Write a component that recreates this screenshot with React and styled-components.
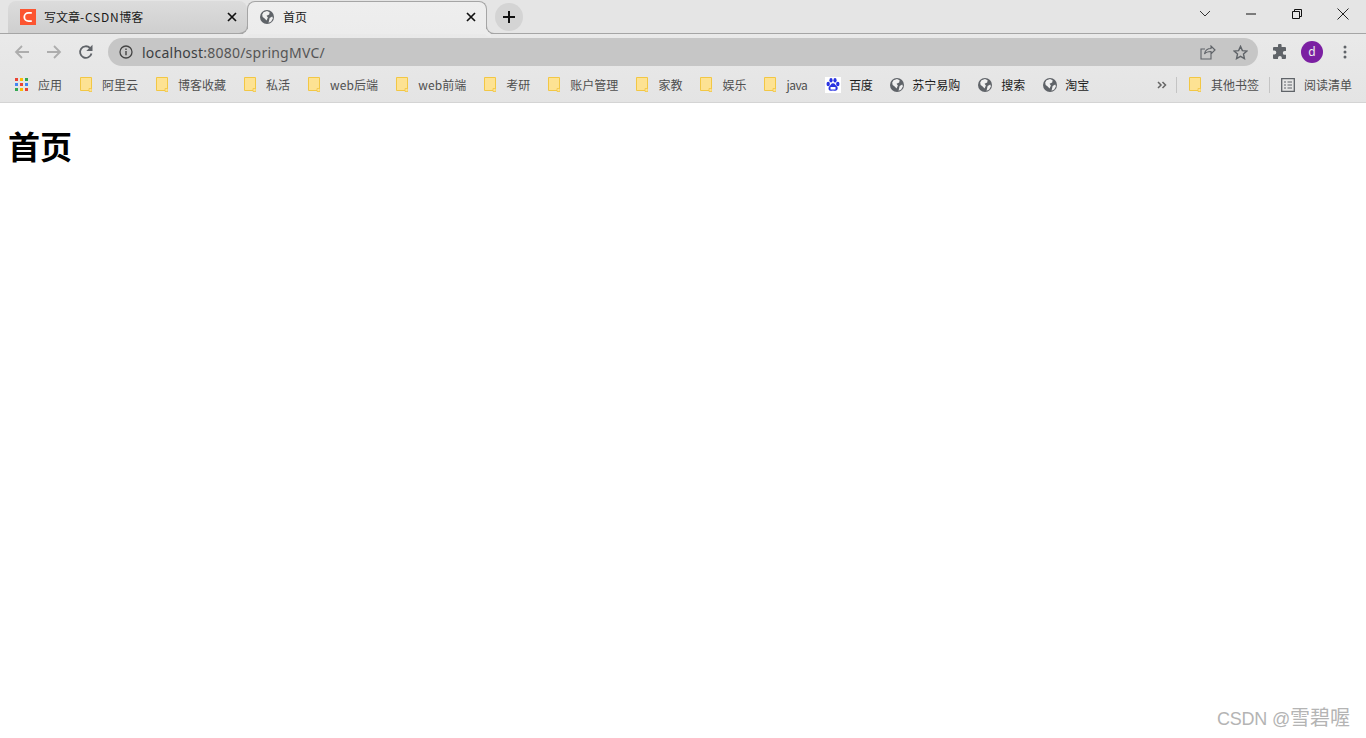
import React from "react";
import styled, { createGlobalStyle } from "styled-components";

const Global = createGlobalStyle`
  html, body { margin: 0; padding: 0; background: #fff; }
  body { font-family: "Noto Sans CJK SC", "Noto Sans", sans-serif; overflow: hidden; }
`;
const Page = styled.div`position: relative; width: 1366px; height: 738px; background: #fff; overflow: hidden;`;
const Chrome = styled.header`
  height: 103px; box-sizing: border-box; border-bottom: 1px solid #d4d4d4;
  background: linear-gradient(#ececec, #e4e4e4 100%);
`;
const TabStrip = styled.div`
  display: flex; align-items: flex-end; height: 34px; box-sizing: border-box; padding-left: 8px;
  background: #e5e5e5; border-bottom: 1px solid #a5a5a5; position: relative;
`;
const Tab = styled.div`
  display: flex; align-items: center; width: ${p => p.$w}px; height: 33px; box-sizing: border-box;
  margin-bottom: -1px; position: relative; padding: 0 10px 1px 12px;
  font-size: 12px; color: #1a1a1a;
  border-radius: ${p => p.$active ? "8px 8px 0 0" : "8px 8px 8px 0"};
  background: ${p => p.$active ? "linear-gradient(#eeeeee,#ececec)" : "linear-gradient(#dcdcdc,#cfcfcf)"};
  border: ${p => p.$active ? "1px solid #a5a5a5" : "0"};
  border-bottom: ${p => p.$active ? "1px solid #ececec" : "1px solid #a5a5a5"};
`;
const Flare = styled.span`
  position: absolute; bottom: -1px; ${p => p.$side}: -8px; width: 8px; height: 8px; box-sizing: border-box;
  border-bottom: 1px solid #a5a5a5;
  border-${p => p.$side === "right" ? "left" : "right"}: 1px solid #a5a5a5;
  border-radius: ${p => p.$side === "right" ? "0 0 0 8px" : "0 0 8px 0"};
  box-shadow: ${p => p.$side === "right" ? "-3px 3px 0 #ececec" : "3px 3px 0 #ececec"};
`;
const TabTitle = styled.span`margin-left: ${p => p.$ml}px; flex: 1; line-height: 16px;`;
const LatinRun = styled.span`letter-spacing: 0.75px;`;
const NewTab = styled.div`
  width: 28px; height: 28px; border-radius: 50%; background: #d4d4d4; margin: 0 0 2px 8px;
  display: flex; align-items: center; justify-content: center;
`;
const WinControls = styled.div`display: flex; margin-left: auto; align-self: flex-start; height: 28px; align-items: center;`;
const WinButton = styled.div`width: 46px; height: 28px; display: flex; align-items: center; justify-content: center;`;
const Toolbar = styled.div`display: flex; align-items: center; height: 36px; padding: 0 9px 0 8px;`;
const NavButton = styled.div`width: 28px; height: 28px; margin-right: ${p => p.$mr ?? 4}px; display: flex; align-items: center; justify-content: center;`;
const Omnibox = styled.div`
  width: 1150px; height: 28px; border-radius: 14px; background: #c6c6c6; display: flex; align-items: center;
  padding: 0 2px 0 11px; box-sizing: border-box; margin-right: 8px; margin-left: 4px;
`;
const Url = styled.span`
  font: 14px "Noto Sans", sans-serif; color: #3c4043; margin-left: 9px; flex: 1; letter-spacing: 0.23px;
  em { font-style: normal; color: #555; }
`;
const OmniIcon = styled.div`width: 32px; display: flex; justify-content: center;`;
const Avatar = styled.div`
  width: 22px; height: 22px; border-radius: 50%; background: #7b1fa2; color: #eee; font: 12px/22px "Noto Sans", sans-serif;
  text-align: center; margin: 0 20px 0 7px;
`;
const Bookmarks = styled.nav`display: flex; align-items: center; height: 32px; padding: 0 14px 3px 15px; box-sizing: border-box; gap: 18px; font-size: 12px;`;
const Mark = styled.div`display: flex; align-items: center; gap: ${p => p.$gap || 10}px; color: ${p => p.$dark ? "#1c1c1c" : "#4f4f4f"}; line-height: 16px; white-space: nowrap; letter-spacing: ${p => p.$ls || 0}px;`;
const Sep = styled.div`width: 1px; height: 16px; background: #c4c4c4;`;
const RightMarks = styled.div`display: flex; align-items: center; margin-left: auto;`;
const OtherMark = styled(Mark)`margin: 0 10px 0 12px;`;
const ReadingMark = styled(Mark)`margin-left: 11px;`;
const Heading = styled.h1`margin: 18px 8px 0; font: bold 32px/48px "Noto Sans CJK SC", sans-serif; color: #000;`;
const Watermark = styled.div`
  position: absolute; right: 16px; bottom: 6px; font: 20px/26px "Noto Sans CJK SC", sans-serif; color: #b4b4b4;
`;
const WatermarkLatin = styled.span`font: 18px/26px "Liberation Sans", sans-serif; letter-spacing: -0.2px;`;

const Folder = () => (
  <svg width="12" height="15" viewBox="0 0 12 15">
    <path d="M.5.5h11v13h-11z" fill="#fde293" stroke="#f2c744" />
    <path d="M9 11.500h3v3H9z" fill="#fde293" stroke="#f2c744" strokeWidth=".8"/>
  </svg>
);
const Globe = () => (
  <svg width="14" height="14" viewBox="0 0 16 16">
    <circle cx="8" cy="8" r="8" fill="#5f6368" />
    <path d="M4 2.500 8 1l3 1.500-.5 2.500-3 1.500L9 8.500 7.500 12 5 9.500 3 8 2.500 5zM11 9l3-1.500.8 2-2 3.500-3 1.500z" fill="#f0f0f0" />
  </svg>
);
const Apps = () => {
  const c = ["#ea4335","#fbbc05","#34a853","#4285f4","#ea4335","#4285f4","#34a853","#fbbc05","#ea4335"];
  return (
    <svg width="13" height="13" viewBox="0 0 13 13">
      {c.map((f, i) => <rect key={i} x={(i % 3) * 5} y={Math.floor(i / 3) * 5} width="3" height="3" fill={f} />)}
    </svg>
  );
};
const Baidu = () => (
  <svg width="16" height="16" viewBox="0 0 16 16">
    <rect width="16" height="16" fill="#fff" />
    <g fill="#2932e1">
      <ellipse cx="3.200" cy="7" rx="1.700" ry="2.200" /><ellipse cx="6" cy="3.200" rx="1.600" ry="2.200" />
      <ellipse cx="10" cy="3.200" rx="1.600" ry="2.200" /><ellipse cx="12.800" cy="7" rx="1.700" ry="2.200" />
      <path d="M8 6.300c2 0 2.500 2 4 3.300 1.500 1.500.5 4.400-1.800 4.200-1-.1-1.500-.4-2.200-.4s-1.300.4-2.300.4C3.400 14 3 11 4.200 9.600 5.700 8.300 6 6.300 8 6.300z" />
    </g>
    <rect x="5.500" y="10" width="5" height="2.500" fill="#fff" />
  </svg>
);
const Csdn = () => (
  <svg width="16" height="16" viewBox="0 0 16 16">
    <rect width="16" height="16" fill="#fc5531" />
    <path d="M11.800 3.800H8.500a4.200 4.200 0 0 0 0 8.400h3.300" fill="none" stroke="#fff" strokeWidth="1.800" />
  </svg>
);
const X = () => (
  <svg width="10" height="10" viewBox="0 0 10 10"><path d="M1 1l8 8M9 1l-8 8" stroke="#111" strokeWidth="1.700" /></svg>
);
const Arrow = ({ flip }) => (
  <svg width="16" height="14" viewBox="0 0 16 14" style={flip ? { transform: "scaleX(-1)" } : undefined}>
    <path d="M1 7h13M8 1l6 6-6 6" fill="none" stroke="#adadad" strokeWidth="1.800" />
  </svg>
);

const left = [
  ["阿里云"], ["博客收藏"], ["私活"], ["web后端", 0.1], ["web前端", 0.1], ["考研"],
  ["账户管理"], ["家教"], ["娱乐"], ["java", -0.5],
];
const linked = [["苏宁易购", 8], ["搜索", 9], ["淘宝", 8]];

export default function App() {
  return (
    <Page>
      <Global />
      <Chrome>
        <TabStrip>
          <Tab $w={239}><Csdn /><TabTitle $ml={8}>写文章<LatinRun>-CSDN</LatinRun>博客</TabTitle><X /></Tab>
          <Tab $w={240} $active>
            <Flare $side="left" /><Globe /><TabTitle $ml={9}>首页</TabTitle><X /><Flare $side="right" />
          </Tab>
          <NewTab>
            <svg width="14" height="14" viewBox="0 0 14 14"><path d="M7 1v12M1 7h12" stroke="#111" strokeWidth="2" /></svg>
          </NewTab>
          <WinControls>
            <WinButton>
              <svg width="12" height="8" viewBox="0 0 12 8"><path d="M1 1l5 5 5-5" fill="none" stroke="#333" /></svg>
            </WinButton>
            <WinButton>
              <svg width="10" height="2" viewBox="0 0 10 2"><path d="M0 1h10" stroke="#111" /></svg>
            </WinButton>
            <WinButton>
              <svg width="10" height="10" viewBox="0 0 10 10"><path d="M.5 2.500h7v7h-7zM2.500 2.500v-2h7v7h-2" fill="none" stroke="#111" /></svg>
            </WinButton>
            <WinButton>
              <svg width="12" height="12" viewBox="0 0 12 12"><path d="M.5.5l11 11M11.500.5l-11 11" stroke="#222" /></svg>
            </WinButton>
          </WinControls>
        </TabStrip>
        <Toolbar>
          <NavButton><Arrow flip /></NavButton>
          <NavButton><Arrow /></NavButton>
          <NavButton>
            <svg width="16" height="16" viewBox="0 0 16 16">
              <path d="M13.500 9.500A5.800 5.800 0 1 1 12 4" fill="none" stroke="#5f6368" strokeWidth="1.800" />
              <path d="M14.500.8v6.200H8.300z" fill="#5f6368" />
            </svg>
          </NavButton>
          <Omnibox>
            <svg width="14" height="14" viewBox="0 0 14 14">
              <circle cx="7" cy="7" r="6" fill="none" stroke="#444" strokeWidth="1.300" />
              <path d="M7 6v4.300M7 3.500v1.400" stroke="#444" strokeWidth="1.400" />
            </svg>
            <Url>localhost<em>:8080/springMVC/</em></Url>
            <OmniIcon>
              <svg width="16" height="15" viewBox="0 0 16 15">
                <path d="M11 9v5H1V4h4M15 5l-4-4v2.500C7 3.500 5 6 4.500 9 6 7 8 6.500 11 6.500V9z" fill="none" stroke="#5f6368" strokeWidth="1.100" />
              </svg>
            </OmniIcon>
            <OmniIcon>
              <svg width="15" height="15" viewBox="0 0 16 16">
                <path d="M8 1.500l2 4.500 4.800.5-3.600 3.200 1 4.800L8 12.100l-4.200 2.400 1-4.800L1.200 6.500 6 6z" fill="none" stroke="#5f6368" strokeWidth="1.500" />
              </svg>
            </OmniIcon>
          </Omnibox>
          <NavButton $mr={0}>
            <svg width="16" height="16" viewBox="0 0 16 16">
              <path d="M6 1.500a1.800 1.800 0 0 1 3.600 0V3H13a1 1 0 0 1 1 1v3h-1.300a1.900 1.900 0 0 0 0 3.800H14V14a1 1 0 0 1-1 1H9.800v-1.200a1.900 1.900 0 0 0-3.800 0V15H2a1 1 0 0 1-1-1v-3.500h1.300a2 2 0 0 0 0-4H1V4a1 1 0 0 1 1-1h4z" fill="#5f6368" />
            </svg>
          </NavButton>
          <Avatar>d</Avatar>
          <svg width="4" height="14" viewBox="0 0 4 14">
            <circle cx="2" cy="2" r="1.500" fill="#5f6368" /><circle cx="2" cy="7" r="1.500" fill="#5f6368" /><circle cx="2" cy="12" r="1.500" fill="#5f6368" />
          </svg>
        </Toolbar>
        <Bookmarks>
          <Mark><Apps />应用</Mark>
          {left.map(([t, ls]) => <Mark key={t} $ls={ls}><Folder />{t}</Mark>)}
          <Mark $dark $gap={8} $ls={-0.5}><Baidu />百度</Mark>
          {linked.map(([t, g]) => <Mark key={t} $dark $gap={g}><Globe />{t}</Mark>)}
          <RightMarks>
            <svg width="10" height="8" viewBox="0 0 10 8" style={{ marginRight: 9 }}>
              <path d="M1 1l3 3-3 3M5.500 1l3 3-3 3" fill="none" stroke="#666" strokeWidth="1.500" />
            </svg>
            <Sep />
            <OtherMark><Folder />其他书签</OtherMark>
            <Sep />
            <ReadingMark $gap={9}>
              <svg width="14" height="14" viewBox="0 0 14 14">
                <path d="M.7.7h12.600v12.600H.7z" fill="none" stroke="#5f6368" strokeWidth="1.300" />
                <path d="M3 4h2M6.500 4h4.500M3 7h2M6.500 7h4.500M3 10h2M6.500 10h4.500" stroke="#5f6368" />
              </svg>
              阅读清单
            </ReadingMark>
          </RightMarks>
        </Bookmarks>
      </Chrome>
      <Heading>首页</Heading>
      <Watermark><WatermarkLatin>CSDN @</WatermarkLatin>雪碧喔</Watermark>
    </Page>
  );
}
